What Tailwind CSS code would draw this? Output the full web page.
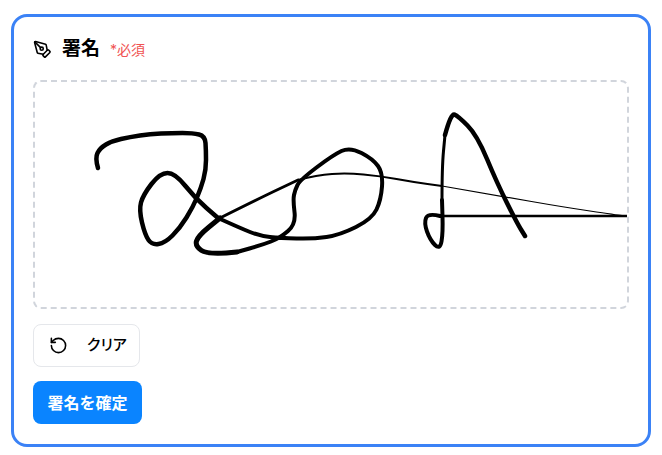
<!DOCTYPE html>
<html lang="ja">
<head>
    <meta charset="UTF-8">
    <title>署名</title>
    <script src="https://cdn.jsdelivr.net/npm/@tailwindcss/browser@4"></script>
</head>
<body class="bg-white font-['Inter','Noto_Sans_CJK_JP',sans-serif]">
    <div class="px-[11px] pt-[14px] pb-2">
        <div class="h-[433px] rounded-2xl border-[3px] border-[#3b82f6] bg-white px-[19px] pt-[19px]">
            <!-- Title -->
            <div class="flex items-center h-[27px]">
                <svg class="w-[19px] h-[19px] text-black" viewBox="0 0 24 24" fill="none" stroke="currentColor" stroke-width="2" stroke-linecap="round" stroke-linejoin="round">
                    <path d="M15.707 21.293a1 1 0 0 1-1.414 0l-1.586-1.586a1 1 0 0 1 0-1.414l5.586-5.586a1 1 0 0 1 1.414 0l1.586 1.586a1 1 0 0 1 0 1.414z"/>
                    <path d="m18 13-1.375-6.874a1 1 0 0 0-.746-.776L3.235 2.028a1 1 0 0 0-1.207 1.207L5.35 15.879a1 1 0 0 0 .776.746L13 18"/>
                    <path d="m2.3 2.3 7.286 7.286"/>
                    <circle cx="11" cy="11" r="2"/>
                </svg>
                <span class="ml-[10px] text-[19px] font-bold text-black">署名</span>
                <span class="ml-[10px] text-sm text-[#f05252]">*必須</span>
            </div>

            <!-- Signature pad -->
            <div class="mt-[17px] h-[229px] w-[596px] rounded-lg border-2 border-dashed border-gray-300 overflow-hidden">
                <svg id="pad" class="block" width="592" height="225" viewBox="35 82 592 225" fill="none" stroke="#000" stroke-linecap="round" stroke-linejoin="round"></svg>
            </div>

            <!-- Buttons -->
            <button class="mt-[15px] flex items-center h-[43px] w-[107px] rounded-lg border border-gray-200 bg-white pl-[15px] text-[15px] font-medium text-black">
                <svg class="w-[19px] h-[19px] text-black" viewBox="0 0 24 24" fill="none" stroke="currentColor" stroke-width="2" stroke-linecap="round" stroke-linejoin="round">
                    <path d="M3 12a9 9 0 1 0 9-9 9.75 9.75 0 0 0-6.74 2.74L3 8"/>
                    <path d="M3 3v5h5"/>
                </svg>
                <span class="ml-[19px] [font-feature-settings:'palt']">クリア</span>
            </button>
            <button class="mt-[14px] flex items-center justify-center h-[43px] w-[109px] rounded-lg bg-[#0a84ff] text-base font-bold text-white">署名を確定</button>
        </div>
    </div>

    <script>
        // signature strokes: [width, points]
        const strokes = [
            [4.5, [[98,168],[95,158],[100,148],[112,141],[130,137],[150,134],[172,133],[193,133],[205,136],[206,150],[206,170],[201,188],[193,207],[180,228],[165,243],[152,245],[145,235],[139,210],[143,195],[160,173],[175,173],[195,198],[218,218]]],
            [4, [[218,218],[240,228],[260,236],[280,238],[313,239],[340,235],[372,219],[381,200],[383,173],[373,159],[350,147],[333,155],[300,180],[295,190],[293,200],[296,224],[280,238],[262,245],[237,252]]],
            [5, [[237,252],[208,255],[195,246],[198,236],[220,218]]],
            [3, [[220,218],[260,198],[298,180]]],
            [2, [[298,180],[317,175],[347,173],[380,176],[413,182],[442,186]]],
            [1.2, [[442,186],[500,196],[563,207],[617,215],[627,216]]],
            [2.5, [[627,216],[530,216],[440,216]]],
            [4, [[440,216],[428,213],[424,223],[430,240],[440,250],[443,233],[442,200]]],
            [3, [[442,200],[442,167],[445,135]]],
            [4.5, [[445,135],[451,113],[458,116],[477,135],[497,183],[517,223],[525,236]]]
        ];

        const pad = document.getElementById('pad');
        strokes.forEach(([w, pts]) => {
            let d = `M${pts[0][0]} ${pts[0][1]}`;
            for (let i = 1; i < pts.length - 1; i++) {
                const mx = (pts[i][0] + pts[i + 1][0]) / 2;
                const my = (pts[i][1] + pts[i + 1][1]) / 2;
                d += ` Q${pts[i][0]} ${pts[i][1]} ${mx} ${my}`;
            }
            const last = pts[pts.length - 1];
            d += ` L${last[0]} ${last[1]}`;
            const path = document.createElementNS('http://www.w3.org/2000/svg', 'path');
            path.setAttribute('d', d);
            path.setAttribute('stroke-width', w);
            pad.appendChild(path);
        });
    </script>
</body>
</html>
